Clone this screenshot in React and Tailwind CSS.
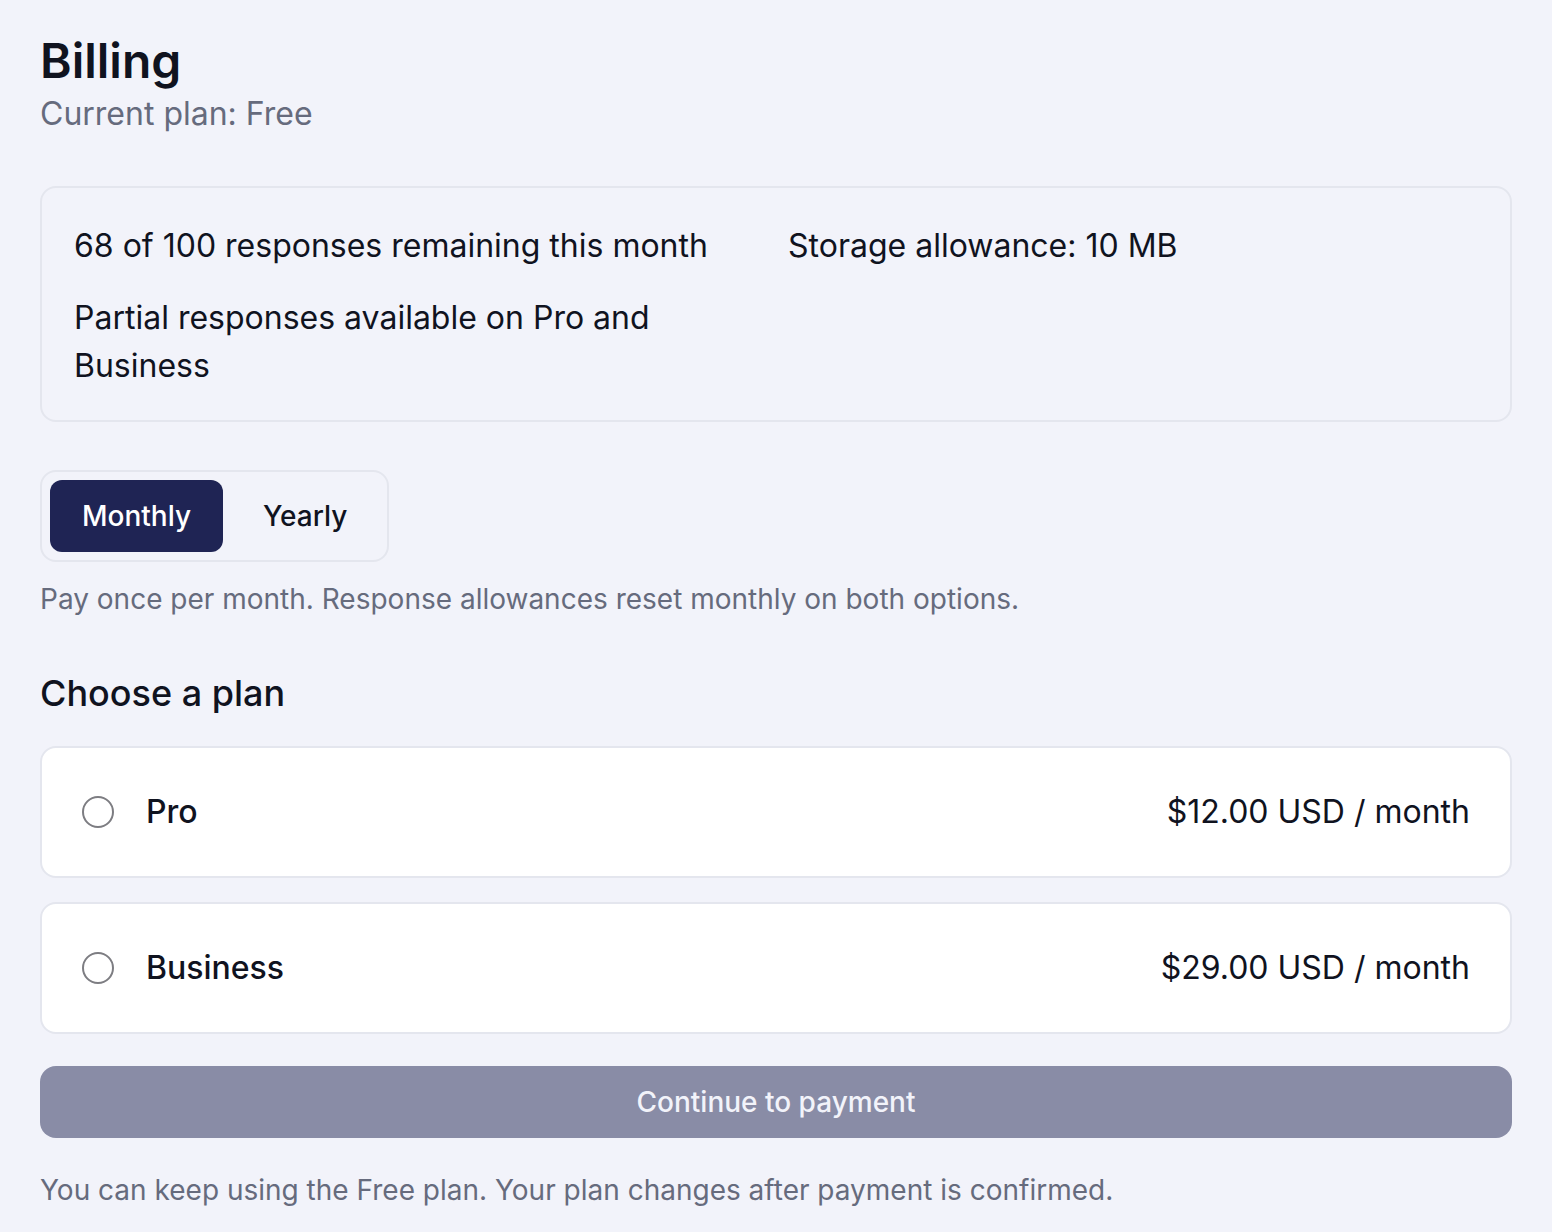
// Billing settings panel

const plans = [
  { id: 'pro', name: 'Pro', price: '$12.00 USD / month' },
  { id: 'business', name: 'Business', price: '$29.00 USD / month' },
];

export default function App() {
  return (
    <div
      className="min-h-[1232px] bg-[#f2f3fa] px-10 pt-8 text-[#10131f]"
      style={{ fontFamily: 'Inter, "Noto Sans", sans-serif' }}
    >
      {/* Header */}
      <h1 className="text-[48px] font-semibold leading-[58px]">Billing</h1>
      <p className="mt-1 text-[32px] leading-[40px] text-[#666b7d]">Current plan: Free</p>

      {/* Usage summary */}
      <div className="mt-[52px] rounded-2xl border-2 border-[#e4e6ee] px-8 pt-[34px] pb-[30px]">
        <div className="grid grid-cols-2 gap-x-6 text-[32px] leading-[48px]">
          <div className="flex flex-col gap-6">
            <span>68 of 100 responses remaining this month</span>
            <span>Partial responses available on Pro and Business</span>
          </div>
          <div>
            <span>Storage allowance: 10 MB</span>
          </div>
        </div>
      </div>

      {/* Billing interval */}
      <div className="mt-12 inline-flex gap-2 rounded-2xl border-2 border-[#e4e6ee] p-2">
        <button className="h-[72px] rounded-xl bg-[#1f2454] px-8 text-[28px] font-medium text-white">
          Monthly
        </button>
        <button className="h-[72px] rounded-xl px-8 text-[28px] font-medium text-[#10131f]">
          Yearly
        </button>
      </div>
      <p className="mt-[17px] text-[28px] leading-[40px] text-[#666b7d]">
        Pay once per month. Response allowances reset monthly on both options.
      </p>

      {/* Plans */}
      <h2 className="mt-[50px] text-[36px] font-medium leading-[48px]">Choose a plan</h2>
      <div className="mt-[29px] flex flex-col gap-6">
        {plans.map((plan) => (
          <label
            key={plan.id}
            className="flex items-center justify-between rounded-2xl border-2 border-[#e4e6ee] bg-white px-10 py-10"
          >
            <span className="flex items-center gap-8">
              <span className="h-8 w-8 rounded-full border-2 border-[#7d7d82]" />
              <span className="text-[32px] font-medium leading-[48px]">{plan.name}</span>
            </span>
            <span className="text-[32px] leading-[48px]">{plan.price}</span>
          </label>
        ))}
      </div>

      <button className="mt-8 h-[72px] w-full rounded-2xl bg-[#898ca6] text-[28px] font-medium text-[#f2f3fa]">
        Continue to payment
      </button>

      <p className="mt-8 text-[28px] leading-[40px] text-[#666b7d]">
        You can keep using the Free plan. Your plan changes after payment is confirmed.
      </p>
    </div>
  );
}
